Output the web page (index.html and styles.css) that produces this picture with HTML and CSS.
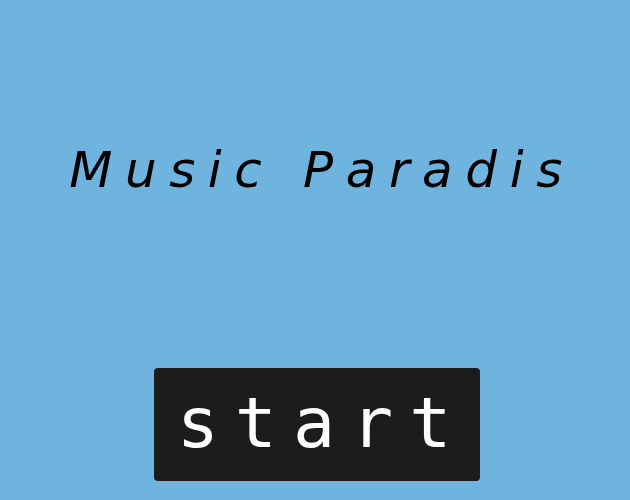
FILE: index.html
```html
<!DOCTYPE html>
<html lang="en">
<head>
    <meta charset="UTF-8">
    <meta name="viewport" content="width=device-width, initial-scale=1.0">
    <title>Music Paradis</title>
    <link rel="stylesheet" href="styles.css">
</head>
<body>
    <div class="screen">
        <h1 class="title">Music Paradis</h1>
        <button class="start-button">start</button>
    </div>
</body>
</html>
```

FILE: styles.css
```css
body {
    margin: 0;
    background-color: #6fb3df;
}

.screen {
    height: 500px;
    display: flex;
    flex-direction: column;
    align-items: center;
    padding-top: 145px;
    box-sizing: border-box;
}

.title {
    margin: 0 0 0 14px;
    font-family: 'DejaVu Sans', sans-serif;
    font-style: italic;
    font-weight: normal;
    font-size: 50px;
    line-height: 1;
    letter-spacing: 12.6px;
    color: #000;
}

.start-button {
    margin: 173px 0 0 4px;
    width: 326px;
    height: 113px;
    border: none;
    border-radius: 4px;
    background-color: #1c1c1c;
    color: #fff;
    font-family: 'DejaVu Sans Mono', monospace;
    font-size: 70px;
    line-height: 1;
    letter-spacing: 16px;
    padding: 0 0 4px 10px;
    display: flex;
    align-items: center;
    justify-content: center;
    cursor: pointer;
}
```
